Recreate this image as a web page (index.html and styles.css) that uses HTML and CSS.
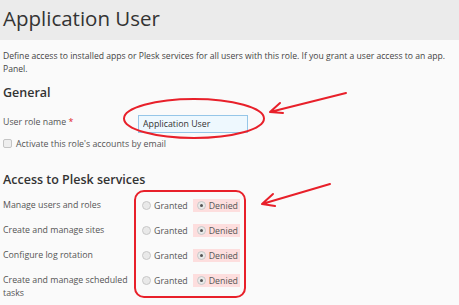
FILE: index.html
```html
<!DOCTYPE html>
<html>
<head>
<meta charset="utf-8">
<link rel="stylesheet" href="styles.css">
</head>
<body>
<div class="page">
  <header class="header"><h1 class="title">Application User</h1></header>
  <main class="content">
    <p class="desc"><span class="desc-line">Define access to installed apps or Plesk services for all users with this role. If you grant a user access to an app.</span><span class="desc-line">Panel.</span></p>
    <h2 class="section">General</h2>
    <div class="field">
      <label class="field-label">User role name <span class="req">*</span></label>
      <div class="field-control"><input class="text-input" type="text" value="Application User"></div>
    </div>
    <div class="check-row">
      <span class="checkbox"></span>
      <span class="check-label">Activate this role's accounts by email</span>
    </div>
    <h2 class="section section-access">Access to Plesk services</h2>
    <div class="perms">
      <div class="perm">
        <div class="perm-label">Manage users and roles</div>
        <div class="radios">
          <span class="opt"><span class="radio"></span>Granted</span>
          <span class="opt opt-denied"><span class="radio radio-on"></span>Denied</span>
        </div>
      </div>
      <div class="perm">
        <div class="perm-label">Create and manage sites</div>
        <div class="radios">
          <span class="opt"><span class="radio"></span>Granted</span>
          <span class="opt opt-denied"><span class="radio radio-on"></span>Denied</span>
        </div>
      </div>
      <div class="perm">
        <div class="perm-label">Configure log rotation</div>
        <div class="radios">
          <span class="opt"><span class="radio"></span>Granted</span>
          <span class="opt opt-denied"><span class="radio radio-on"></span>Denied</span>
        </div>
      </div>
      <div class="perm">
        <div class="perm-label">Create and manage scheduled tasks</div>
        <div class="radios">
          <span class="opt"><span class="radio"></span>Granted</span>
          <span class="opt opt-denied"><span class="radio radio-on"></span>Denied</span>
        </div>
      </div>
    </div>
  </main>
  <svg class="annot" width="459" height="305" viewBox="0 0 459 305">
    <ellipse cx="194" cy="118.5" rx="70" ry="19.5" fill="none" stroke="#e8202a" stroke-width="2"/>
    <path d="M346 93 L270 112 M280 103 L270 112 L283 113" fill="none" stroke="#e8202a" stroke-width="2" stroke-linecap="round" stroke-linejoin="round"/>
    <rect x="135" y="191" width="110" height="106" rx="9" fill="none" stroke="#e8202a" stroke-width="2"/>
    <path d="M330 184 L262 204 M273 194 L262 204 L275 206" fill="none" stroke="#e8202a" stroke-width="2" stroke-linecap="round" stroke-linejoin="round"/>
  </svg>
</div>
</body>
</html>
```

FILE: styles.css
```css
html, body {
  margin: 0;
  padding: 0;
}
body {
  background: #fafafa;
  font-family: "Open Sans", "DejaVu Sans", sans-serif;
  color: #444;
  overflow: hidden;
}
.page {
  position: relative;
  width: 459px;
  height: 305px;
  overflow: hidden;
}
.header {
  height: 40px;
  background: #ebebeb;
  padding-left: 3px;
}
.title {
  margin: 0;
  font-size: 20.5px;
  font-weight: 400;
  line-height: 36px;
  color: #333;
}
.content {
  padding-left: 3px;
}
.desc {
  margin: 10px 0 0;
  font-size: 8.6px;
  line-height: 13px;
  color: #444;
}
.desc-line {
  display: block;
  white-space: nowrap;
}
.section {
  margin: 9px 0 0;
  font-size: 12.5px;
  font-weight: 600;
  line-height: 16px;
  color: #333;
}
.section-access {
  margin-top: 22px;
}
.field {
  display: grid;
  grid-template-columns: 135px 1fr;
  align-items: center;
  margin-top: 9px;
  height: 18px;
}
.field-label {
  font-size: 8.8px;
  color: #555;
}
.req {
  color: #e0232b;
}
.text-input {
  box-sizing: border-box;
  width: 110px;
  height: 18px;
  border: 1px solid #96c6e8;
  background: #eef8fe;
  font-family: "Open Sans", "DejaVu Sans", sans-serif;
  font-size: 8.8px;
  color: #333;
  padding: 0 4px;
  margin: 0;
  outline: none;
}
.check-row {
  display: flex;
  align-items: center;
  gap: 4px;
  margin-top: 9px;
  height: 13px;
}
.checkbox {
  box-sizing: border-box;
  width: 9px;
  height: 9px;
  border: 1px solid #c4c4c4;
  border-radius: 2px;
  background: #eee;
}
.check-label {
  font-size: 8.8px;
  color: #555;
}
.perms {
  margin-top: 5px;
}
.perm {
  display: grid;
  grid-template-columns: 135px 1fr;
  align-items: start;
  padding: 6px 0;
}
.perm-label {
  font-size: 8.8px;
  line-height: 13px;
  color: #555;
  padding-right: 3px;
}
.radios {
  display: flex;
  align-items: center;
  gap: 5px;
  padding-left: 4px;
  height: 13px;
}
.opt {
  display: flex;
  align-items: center;
  gap: 3px;
  font-size: 8.8px;
  color: #555;
  height: 13px;
}
.opt-denied {
  background: #fddede;
  padding: 0 2px 0 4px;
}
.radio {
  box-sizing: border-box;
  width: 9px;
  height: 9px;
  border-radius: 50%;
  border: 1px solid #c8c8c8;
  background: #e9e9e9;
  position: relative;
}
.radio-on::after {
  content: "";
  position: absolute;
  left: 2px;
  top: 2px;
  width: 3px;
  height: 3px;
  border-radius: 50%;
  background: #555;
}
.annot {
  position: absolute;
  left: 0;
  top: 0;
  pointer-events: none;
}
```
